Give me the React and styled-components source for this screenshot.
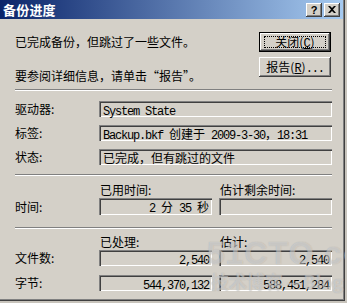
import React from "react";
import styled, { createGlobalStyle } from "styled-components";

const GlobalStyle = createGlobalStyle`
  html, body {
    margin: 0;
    padding: 0;
    background: #c8c4bc;
  }
`;

const Window = styled.div`
  position: relative;
  width: 345px;
  height: 301px;
  background: #d4d0c8;
  box-shadow: inset -1px -1px #404040, inset -2px -2px #808080;
  font-family: "Noto Sans CJK SC", "Liberation Sans", sans-serif;
  font-size: 12px;
  color: #000;
  overflow: hidden;
`;

const TitleBar = styled.div`
  display: flex;
  align-items: center;
  justify-content: space-between;
  height: 19px;
  margin-right: 2px;
  padding: 0 3px 0 3px;
  background: linear-gradient(to right, #0a246a, #a6caf0);
`;

const Title = styled.span`
  color: #fff;
  font-weight: 700;
  font-size: 13px;
  line-height: 19px;
  letter-spacing: 0.2px;
`;

const TitleButtons = styled.div`
  display: flex;
  gap: 2px;
`;

const TitleButton = styled.div`
  display: flex;
  align-items: center;
  justify-content: center;
  width: 16px;
  height: 14px;
  background: #d4d0c8;
  box-shadow: inset -1px -1px #404040, inset 1px 1px #fff,
    inset -2px -2px #808080;
  font-family: "Liberation Sans", sans-serif;
  font-weight: 700;
  font-size: 11px;
  line-height: 14px;
`;

const Body = styled.div`
  display: flex;
  flex-direction: column;
  padding: 13px 13px 0 15px;
`;

const TopRow = styled.div`
  display: flex;
  justify-content: space-between;
`;

const Messages = styled.div`
  display: flex;
  flex-direction: column;
`;

const Message = styled.div`
  line-height: 20px;
  margin-top: ${(p) => p.$top || 0}px;
`;

const ButtonColumn = styled.div`
  display: flex;
  flex-direction: column;
  gap: 5px;
  margin-right: 1px;
`;

const Button = styled.div`
  position: relative;
  box-sizing: border-box;
  width: 72px;
  height: 20px;
  background: #d4d0c8;
  border: ${(p) => (p.$default ? "1px solid #000" : "none")};
  box-shadow: inset -1px -1px #404040, inset 1px 1px #fff,
    inset -2px -2px #808080;
  line-height: ${(p) => (p.$default ? 18 : 20)}px;
  text-align: center;
  white-space: pre;

  &::after {
    content: "";
    display: ${(p) => (p.$default ? "block" : "none")};
    position: absolute;
    inset: 3px 4px 3px 4px;
    border: 1px dotted #000;
  }
`;

const Key = styled.span`
  text-decoration: underline;
  font-family: "Liberation Mono", monospace;
`;

const Separator = styled.div`
  height: 0;
  border-top: 1px solid #808080;
  border-bottom: 1px solid #fff;
  margin-top: ${(p) => p.$top}px;
`;

const InfoGrid = styled.div`
  display: grid;
  grid-template-columns: 84px 1fr;
  row-gap: 8px;
  margin-top: ${(p) => p.$top}px;
  align-items: center;
`;

const Label = styled.div`
  line-height: 16px;
`;

const Field = styled.div`
  box-sizing: border-box;
  height: ${(p) => p.$h || 16}px;
  padding: 1px 3px 0 4px;
  background: #d4d0c8;
  box-shadow: inset 1px 1px #808080, inset 2px 2px #404040,
    inset -1px -1px #fff;
  text-align: ${(p) => (p.$right ? "right" : "left")};
  white-space: pre;
  line-height: ${(p) => (p.$h || 16) - 1}px;
`;

const Half = styled.span`
  font-family: "Liberation Mono", monospace;
  font-size: 12px;
  letter-spacing: -1.2px;
`;

const StatGrid = styled.div`
  display: grid;
  grid-template-columns: 77px 113px 113px;
  column-gap: 7px;
  align-items: center;
  margin-top: ${(p) => p.$top}px;
`;

const Header = styled.div`
  line-height: 14px;
  height: 14px;
  padding-left: 1px;
  margin-bottom: 1px;
`;

const StatLabel = styled.div`
  line-height: 16px;
`;

const Spacer = styled.div`
  grid-column: 1 / -1;
  height: ${(p) => p.$h}px;
`;

const Watermark = styled.div`
  position: absolute;
  left: 207px;
  top: 236px;
  display: flex;
  flex-direction: column;
  pointer-events: none;
  color: rgba(255, 255, 255, 0.38);
  text-shadow: 0 0 1px rgba(110, 110, 110, 0.45);
`;

const MarkBig = styled.div`
  font-family: "Liberation Sans", sans-serif;
  font-weight: 700;
  font-size: 32px;
  line-height: 34px;
  letter-spacing: 1px;
`;

const MarkSmall = styled.div`
  font-size: 18px;
  line-height: 22px;
  font-weight: 700;
  padding-left: 4px;
`;

const CloseIcon = () => (
  <svg width="8" height="7" viewBox="0 0 8 7">
    <path d="M0 0h2l2 2 2-2h2L5 3.5 8 7H6L4 5 2 7H0l3-3.5z" fill="#000" />
  </svg>
);

export default function App() {
  return (
    <>
      <GlobalStyle />
      <Window>
        <TitleBar>
          <Title>备份进度</Title>
          <TitleButtons>
            <TitleButton>?</TitleButton>
            <TitleButton>
              <CloseIcon />
            </TitleButton>
          </TitleButtons>
        </TitleBar>

        <Body>
          <TopRow>
            <Messages>
              <Message>已完成备份，但跳过了一些文件。</Message>
              <Message $top={14}>要参阅详细信息，请单击“报告”。</Message>
            </Messages>
            <ButtonColumn>
              <Button $default>
                关闭(<Key>C</Key>)
              </Button>
              <Button>
                报告(<Key>R</Key>)<Half>...</Half>
              </Button>
            </ButtonColumn>
          </TopRow>

          <Separator $top={3} />

          <InfoGrid $top={10}>
            <Label>驱动器:</Label>
            <Field>
              <Half>System State</Half>
            </Field>
            <Label>标签:</Label>
            <Field>
              <Half>{"Backup.bkf "}</Half>创建于<Half>{" 2009-3-30"}</Half>，<Half>18:31</Half>
            </Field>
            <Label>状态:</Label>
            <Field>已完成，但有跳过的文件</Field>
          </InfoGrid>

          <Separator $top={9} />

          <StatGrid $top={7}>
            <div />
            <Header>已用时间:</Header>
            <Header>估计剩余时间:</Header>
            <StatLabel>时间:</StatLabel>
            <Field $h={17} $right>
              <Half>{"2 "}</Half>分<Half>{" 35 "}</Half>秒
            </Field>
            <Field $h={17} />
          </StatGrid>

          <Separator $top={12} />

          <StatGrid $top={6}>
            <div />
            <Header>已处理:</Header>
            <Header>估计:</Header>
            <StatLabel>文件数:</StatLabel>
            <Field $right>
              <Half>2,540</Half>
            </Field>
            <Field $right>
              <Half>2,540</Half>
            </Field>
            <Spacer $h={9} />
            <StatLabel>字节:</StatLabel>
            <Field $right>
              <Half>544,370,132</Half>
            </Field>
            <Field $right>
              <Half>588,451,284</Half>
            </Field>
          </StatGrid>
        </Body>

        <Watermark>
          <MarkBig>51CTO.com</MarkBig>
          <MarkSmall>技术博客 —Blog</MarkSmall>
        </Watermark>
      </Window>
    </>
  );
}
